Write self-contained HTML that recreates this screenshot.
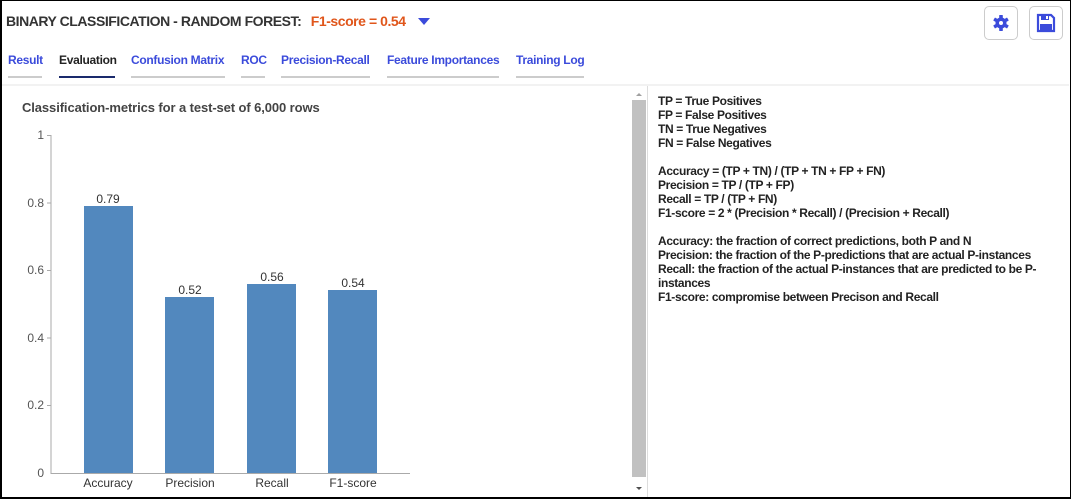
<!DOCTYPE html>
<html><head><meta charset="utf-8"><style>
*{margin:0;padding:0;box-sizing:border-box}
body{width:1071px;height:499px;overflow:hidden;background:#fff;font-family:"Liberation Sans",sans-serif;position:relative}
.frame{position:absolute;left:0;top:0;width:1071px;height:499px;border:1px solid #000;border-left-width:2px;border-bottom-width:2px;pointer-events:none}
.title{position:absolute;left:6px;top:13px;font-size:14px;font-weight:bold;color:#333;white-space:nowrap;letter-spacing:-0.45px}
.title .f1{color:#e0561b;margin-left:6px}
.tri{position:absolute;left:418px;top:18px;width:0;height:0;border-left:6px solid transparent;border-right:6px solid transparent;border-top:7px solid #3b4bdb}
.btn{position:absolute;top:6px;width:34px;height:34px;border:1px solid #ccc;border-radius:5px;background:#fff}
.tab{position:absolute;top:53px;font-size:12px;font-weight:bold;color:#3b4bdb;white-space:nowrap;letter-spacing:-0.3px}
.ul{position:absolute;top:76px;height:2px;background:#ccc}
.sep{position:absolute;left:2px;top:84px;width:1067px;height:2px;background:#f2f2f2}
.ctitle{position:absolute;left:22px;top:100px;font-size:13px;font-weight:bold;color:#444;letter-spacing:-0.1px}
.right{position:absolute;left:658px;top:94px;font-size:12px;font-weight:bold;color:#222;line-height:14px;letter-spacing:-0.35px;width:400px}
</style></head><body>
<div class="title">BINARY CLASSIFICATION - RANDOM FOREST: <span class="f1">F1-score = 0.54</span></div>
<div class="tri"></div>
<div class="btn" style="left:984px"><svg width="34" height="34" viewBox="0 0 34 34" style="position:absolute;left:-1px;top:-1px"><g fill="#3b4bdb" transform="translate(17,17)"><circle r="5.5"/><rect x="-1.8" y="-8" width="3.6" height="16" rx="0.5"/><rect x="-1.8" y="-8" width="3.6" height="16" rx="0.5" transform="rotate(60)"/><rect x="-1.8" y="-8" width="3.6" height="16" rx="0.5" transform="rotate(120)"/><circle r="2" fill="#fff"/></g></svg></div>
<div class="btn" style="left:1029px"><svg width="34" height="34" viewBox="0 0 34 34" style="position:absolute;left:-1px;top:-1px"><path d="M9 9h13l3 3v13H9z" fill="none" stroke="#3b4bdb" stroke-width="2.2"/><rect x="12" y="9" width="8" height="5" fill="#3b4bdb"/><rect x="17" y="10" width="2" height="3" fill="#fff"/><rect x="11" y="18" width="12" height="6" fill="#3b4bdb"/></svg></div>
<div class="tab" style="left:8px">Result</div><div class="ul" style="left:8px;width:34px"></div>
<div class="tab" style="left:59px;color:#222">Evaluation</div><div class="ul" style="left:59px;width:56px;background:#1a2a6c"></div>
<div class="tab" style="left:131px">Confusion Matrix</div><div class="ul" style="left:131px;width:94px"></div>
<div class="tab" style="left:241px">ROC</div><div class="ul" style="left:241px;width:24px"></div>
<div class="tab" style="left:281px">Precision-Recall</div><div class="ul" style="left:281px;width:89px"></div>
<div class="tab" style="left:387px">Feature Importances</div><div class="ul" style="left:387px;width:112px"></div>
<div class="tab" style="left:516px">Training Log</div><div class="ul" style="left:516px;width:68px"></div>
<div class="sep"></div>
<div class="ctitle">Classification-metrics for a test-set of 6,000 rows</div>
<svg width="660" height="499" style="position:absolute;left:0;top:0" font-family="Liberation Sans,sans-serif" font-size="12">
<g fill="#555" text-anchor="end">
<text x="44" y="139">1</text><text x="44" y="207">0.8</text><text x="44" y="274">0.6</text><text x="44" y="342">0.4</text><text x="44" y="409">0.2</text><text x="44" y="477">0</text></g>
<g stroke="#aaa" stroke-width="1" fill="none"><path d="M51 135V473.5H410"/><path d="M47 135.5h4M47 203h4M47 270.5h4M47 338h4M47 405.5h4"/></g>
<g fill="#5288be"><rect x="84" y="206" width="49" height="267"/><rect x="165" y="297" width="49" height="176"/><rect x="247" y="284" width="49" height="189"/><rect x="328" y="290" width="49" height="183"/></g>
<g fill="#333" text-anchor="middle"><text x="108" y="203">0.79</text><text x="190" y="294">0.52</text><text x="272" y="281">0.56</text><text x="353" y="287">0.54</text>
<text x="108" y="487">Accuracy</text><text x="190" y="487">Precision</text><text x="272" y="487">Recall</text><text x="353" y="487">F1-score</text></g>
<rect x="632" y="100" width="14" height="377" fill="#c1c1c1"/>
<path d="M636 96l3-3 3 3z" fill="#a0a0a0"/><path d="M636 487l3 3 3-3z" fill="#505050"/>
<rect x="647" y="86" width="1" height="413" fill="#ddd"/>
</svg>
<div class="right">TP = True Positives<br>FP = False Positives<br>TN = True Negatives<br>FN = False Negatives<br><br>Accuracy = (TP + TN) / (TP + TN + FP + FN)<br>Precision = TP / (TP + FP)<br>Recall = TP / (TP + FN)<br>F1-score = 2 * (Precision * Recall) / (Precision + Recall)<br><br>Accuracy: the fraction of correct predictions, both P and N<br>Precision: the fraction of the P-predictions that are actual P-instances<br>Recall: the fraction of the actual P-instances that are predicted to be P-<br>instances<br>F1-score: compromise between Precison and Recall</div>
<div class="frame"></div>
</body></html>
